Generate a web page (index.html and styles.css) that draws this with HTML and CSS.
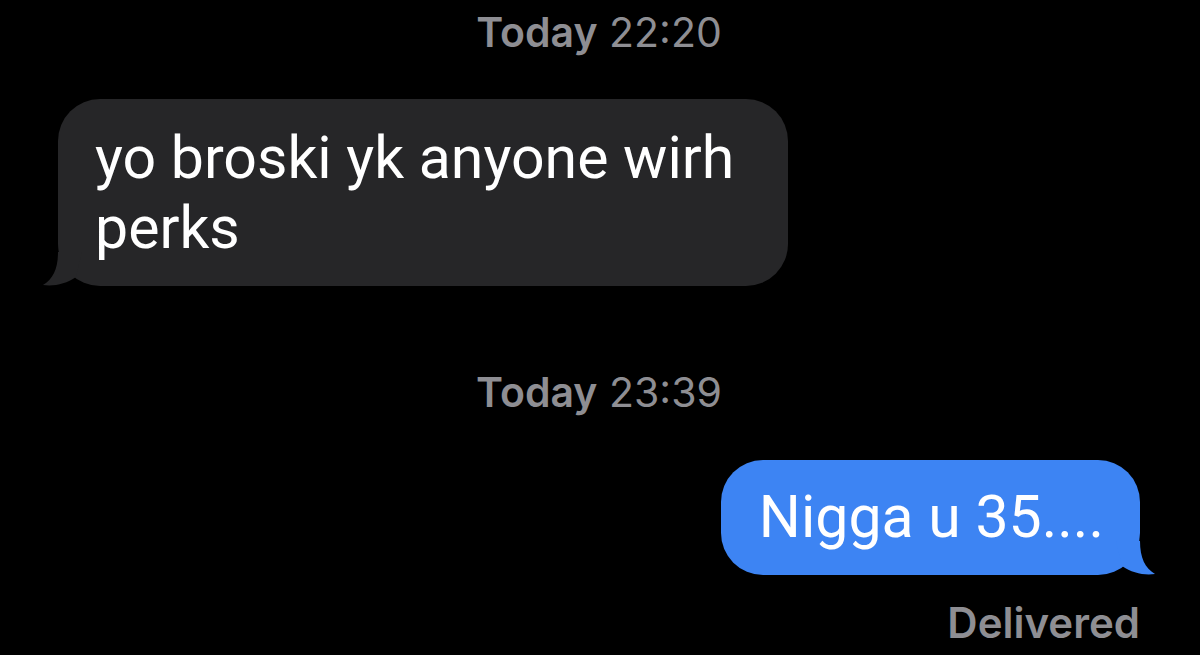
FILE: index.html
```html
<!DOCTYPE html>
<html>
  <head>
    <title>Messages</title>
    <link rel="stylesheet" href="styles.css">
  </head>
  <body>
    <div class="thread">
      <div class="stamp"><b>Today</b> 22:20</div>
      <div class="row">
        <div class="bubble received">
          yo broski yk anyone wirh perks
          <svg class="tail" width="40" height="34" viewBox="0 0 40 34"><path d="M16 0 C16 17 11 27 1 33 C12 34.5 24 32 34 25 L40 0 Z"/></svg>
        </div>
      </div>

      <div class="stamp stamp-second"><b>Today</b> 23:39</div>
      <div class="row row-sent">
        <div class="bubble sent">
          Nigga u 35....
          <svg class="tail" width="40" height="34" viewBox="0 0 40 34"><path d="M16 0 C16 17 11 27 1 33 C12 34.5 24 32 34 25 L40 0 Z"/></svg>
        </div>
      </div>
      <div class="status">Delivered</div>
    </div>
  </body>
</html>
```

FILE: styles.css
```css
body {
  background: #000;
  color: #FFF;
  font-family: Inter, "Noto Sans", sans-serif;
  margin: 0px;
}

.thread {
  display: flex;
  flex-direction: column;
  padding: 0 60px 0 58px;
}

.stamp {
  color: #8E8E93;
  font-size: 41px;
  line-height: 48px;
  margin-top: 8px;
  text-align: center;
}

.stamp b {
  font-weight: 600;
}

.stamp-second {
  margin-top: 82px;
}

.row {
  display: flex;
  margin-top: 43px;
}

.row-sent {
  justify-content: flex-end;
  margin-top: 44px;
}

.bubble {
  border-radius: 42px;
  box-sizing: border-box;
  font-family: Roboto, "Noto Sans", sans-serif;
  font-size: 59px;
  line-height: 70px;
  position: relative;
}

.received {
  background: #262628;
  max-width: 730px;
  padding: 24px 40px 23px 37px;
}

.sent {
  background: #3D84F3;
  padding: 22px 36px 23px 38px;
}

/* tails */
.tail {
  bottom: 0;
  position: absolute;
}

.received .tail {
  fill: #262628;
  left: -16px;
}

.sent .tail {
  fill: #3D84F3;
  right: -16px;
  transform: scaleX(-1);
}

.status {
  color: #8E8E93;
  font-size: 42px;
  font-weight: 600;
  line-height: 48px;
  margin-top: 24px;
  text-align: right;
}
```
